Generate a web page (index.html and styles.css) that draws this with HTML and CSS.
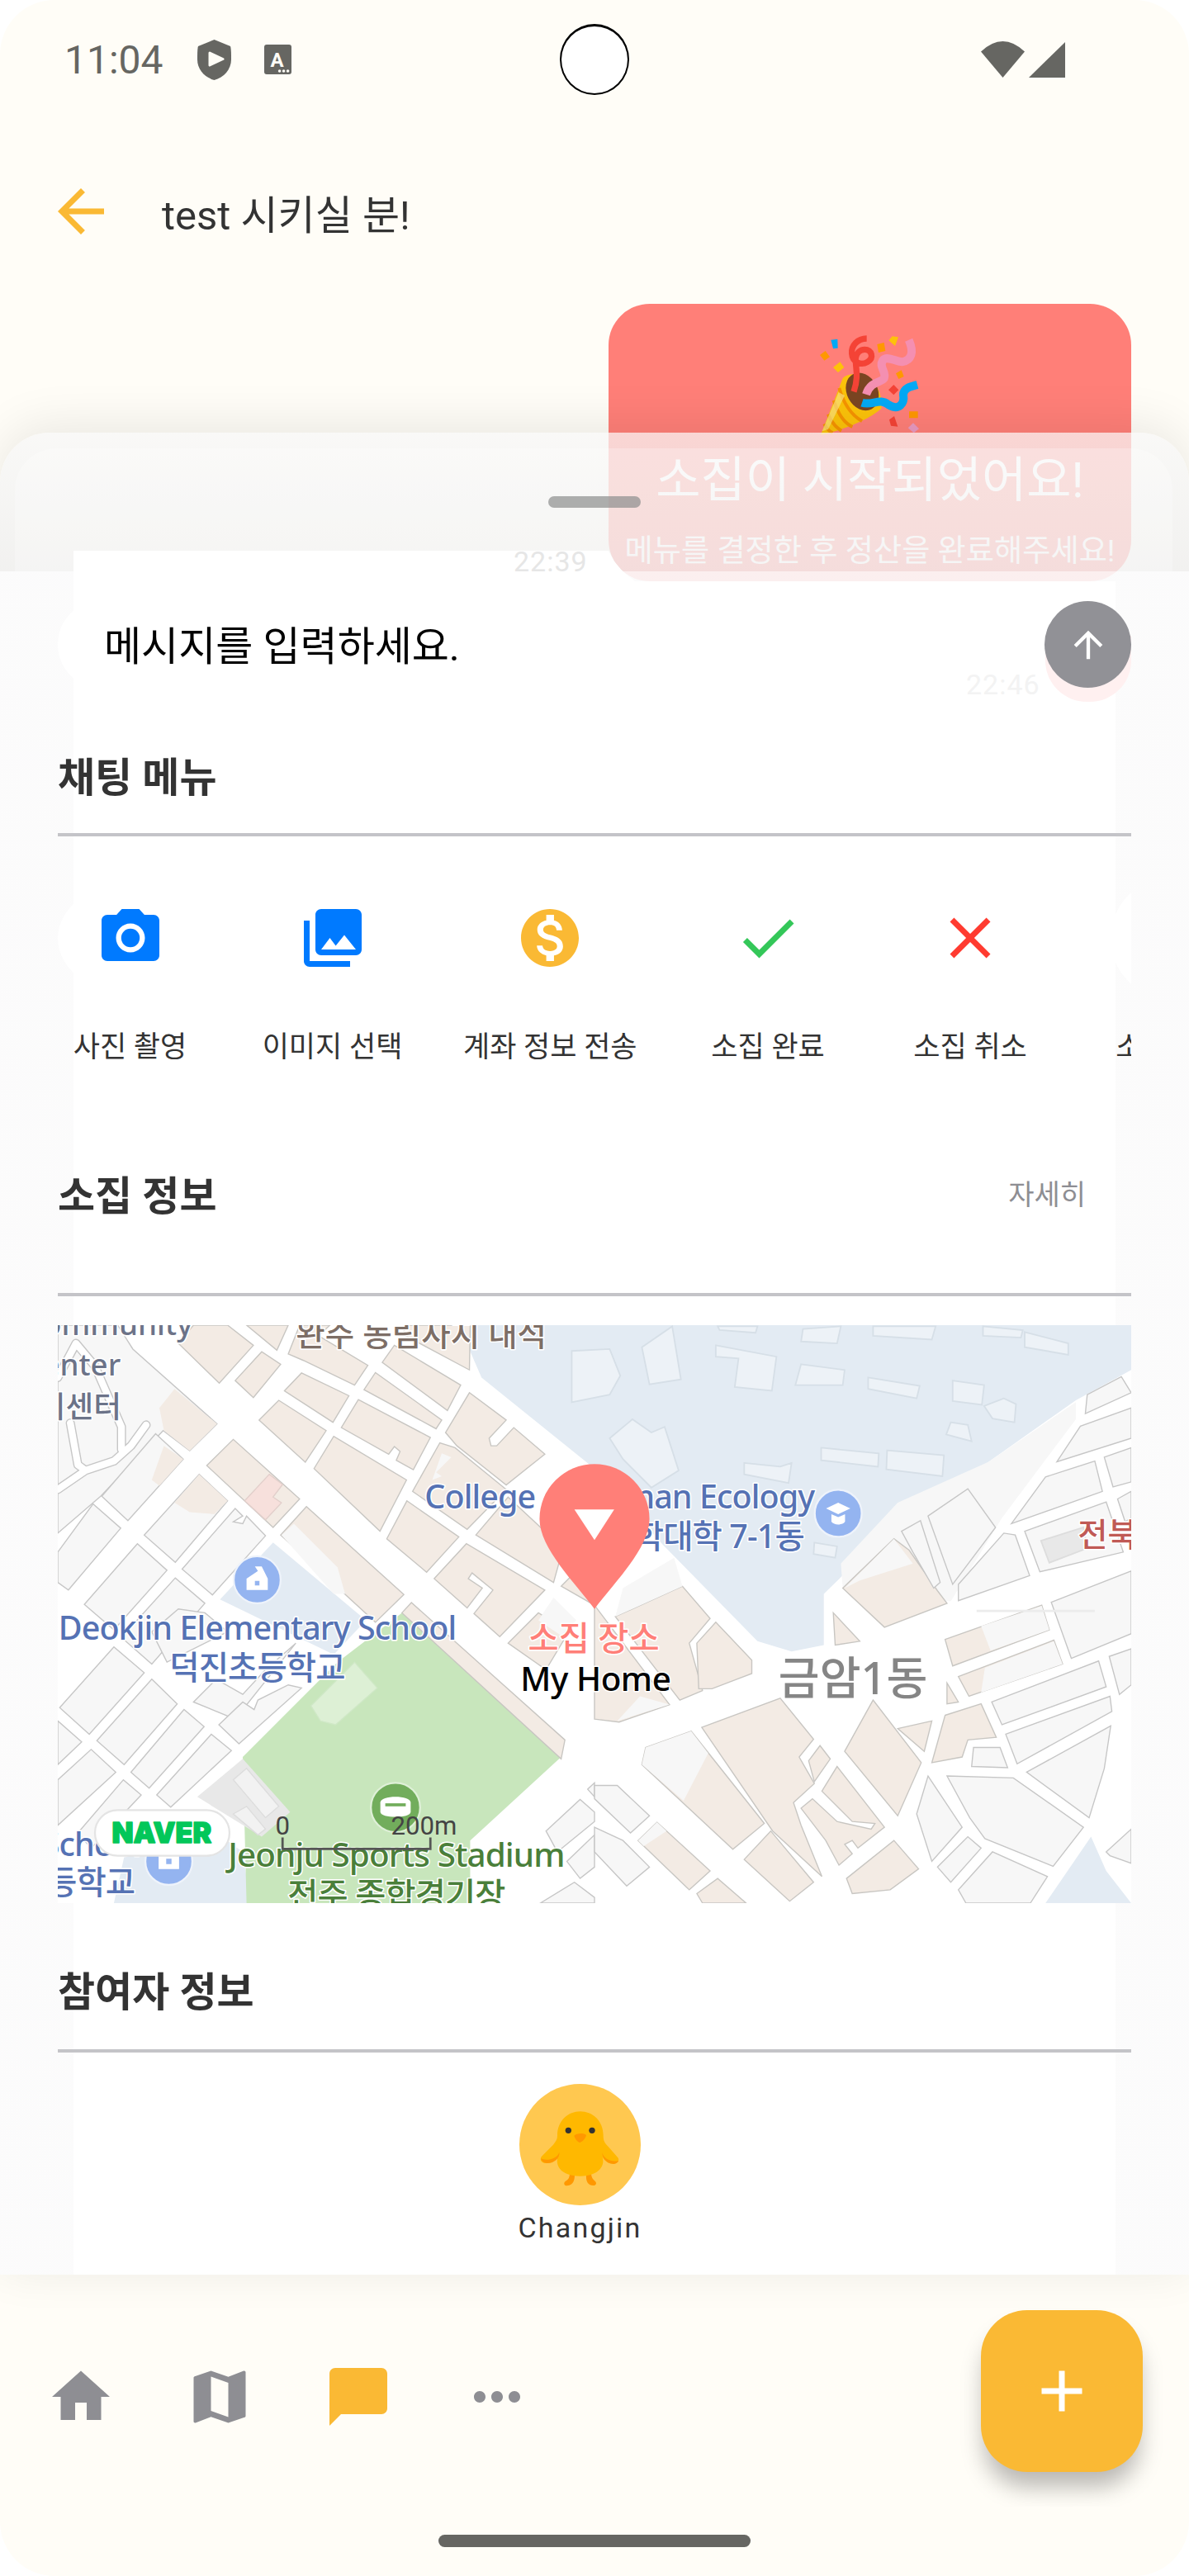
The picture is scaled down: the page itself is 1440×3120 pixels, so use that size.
FILE: index.html
```html
<!DOCTYPE html>
<html lang="ko">
<head>
    <meta charset="UTF-8">
    <meta name="viewport" content="width=device-width, initial-scale=1.0">
    <title>test 시키실 분!</title>
    <link rel="stylesheet" href="styles.css">
</head>
<body>
<div class="screen">
    <div class="status-bar">
        <span class="status-time">11:04</span>
        <svg class="status-shield" viewBox="0 0 41 49"><path d="M20.500 0 40 8c1 3 1 10 1 16 0 12-9 22-20.500 25C9 46 0 36 0 24 0 18 0 11 1 8z"/><path class="cut-round" d="M15 16l16 7.500L15 31z"/></svg>
        <svg class="status-a" viewBox="0 0 33 36"><rect width="33" height="36" rx="3"/><text class="cut-text" x="15.500" y="27" text-anchor="middle">A</text><circle class="cut" cx="18.600" cy="32" r="1.800"/><circle class="cut" cx="23.600" cy="32" r="1.800"/><circle class="cut" cx="28.600" cy="32" r="1.800"/></svg>
        <span class="status-spacer"></span>
        <svg class="status-wifi" viewBox="0 0 53 45"><path d="M26.500 44 0 12.500Q26.500-12.500 53 12.500z"/></svg>
        <svg class="status-signal" viewBox="0 0 44 45"><path d="M44 1v43H0z"/></svg>
    </div>
    <div class="punch-hole"></div>

    <header class="app-header">
        <svg class="icon-84 accent" viewBox="0 0 24 24"><path d="M20 11H7.830l5.590-5.590L12 4l-8 8 8 8 1.410-1.410L7.830 13H20v-2z"/></svg>
        <h1>test 시키실 분!</h1>
    </header>

    <main class="chat">
        <div class="bubble">
            <svg class="popper" viewBox="0 0 450 450">
                <path fill="#fbc20a" d="M45 395 125 190C140 170 190 170 220 190 255 215 270 260 265 300 220 340 120 380 45 395z"/>
                <path fill="none" stroke="#f59300" stroke-width="12" d="M112 225C125 270 150 320 195 345M92 270C105 310 125 350 160 366M72 320C82 345 95 365 120 380M58 355C65 370 72 380 88 388"/>
                <path fill="#fbe37e" opacity="0.7" d="M50 382 110 240 132 252 72 375z"/>
                <ellipse fill="#7a4522" cx="196" cy="238" rx="56" ry="72" transform="rotate(-28 196 238)"/>
                <path fill="none" stroke="#f44336" stroke-width="22" d="M212 45C180 45 155 70 158 100 160 130 190 145 215 130 240 115 230 85 205 85 185 85 175 100 172 115 170 150 185 180 165 238"/>
                <path fill="none" stroke="#f48fb1" stroke-width="30" d="M210 248C225 200 265 205 275 190 285 165 255 150 270 125 285 105 320 130 340 130 375 125 385 95 365 50"/>
                <path fill="none" stroke="#03a9f4" stroke-width="30" d="M195 278C230 290 260 260 290 285 330 310 350 280 345 250 345 225 370 220 396 213"/>
                <path fill="#ff9800" d="M42 105 62 90 78 112 58 125zM250 66 275 60 280 90 255 96zM318 172 338 160 347 183 328 192zM366 310H398V334H366z"/>
                <path fill="#03a9f4" d="M82 50 106 47 107 80 90 82z"/>
                <path fill="#fdc20a" d="M90 150 115 130 130 150 108 168zM292 52 305 37 327 40 315 72z"/>
                <path fill="#f44336" d="M291 232 310 213 328 232 310 250zM294 340 312 327 325 365 300 362z"/>
                <path fill="#e99ac0" d="M362 370 381 352 402 373 383 388z"/>
            </svg>
            <p class="bubble-title">소집이 시작되었어요!</p>
            <p class="bubble-sub">메뉴를 결정한 후 정산을 완료해주세요!</p>
        </div>
    </main>

    <section class="sheet">
        <div class="sheet-panel"></div>
        <span class="ghost-time ghost-one">22:39</span>
        <div class="ghost-mine"></div>

        <div class="sheet-handle"></div>

        <div class="input-row">
            <div class="input-pill">메시지를 입력하세요.</div>
            <button class="send-btn">
                <svg viewBox="0 0 24 24"><path d="M4 12l1.410 1.410L11 7.830V20h2V7.830l5.580 5.590L20 12l-8-8-8 8z"/></svg>
            </button>
        </div>
        <span class="ghost-time ghost-two">22:46</span>

        <div class="section-head first">
            <h2>채팅 메뉴</h2>
        </div>
        <hr>

        <div class="menu-strip">
            <div class="menu-row">
                <div class="menu-item">
                    <svg class="icon-84 blue" viewBox="0 0 24 24"><circle cx="12" cy="12" r="3.200"/><path d="M9 2 7.170 4H4c-1.100 0-2 .9-2 2v12c0 1.100.9 2 2 2h16c1.100 0 2-.9 2-2V6c0-1.100-.9-2-2-2h-3.170L15 2H9zm3 15c-2.760 0-5-2.240-5-5s2.240-5 5-5 5 2.240 5 5-2.240 5-5 5z"/></svg>
                    <span>사진 촬영</span>
                </div>
                <div class="menu-item">
                    <svg class="icon-84 blue" viewBox="0 0 24 24"><path d="M22 16V4c0-1.100-.9-2-2-2H8c-1.100 0-2 .9-2 2v12c0 1.100.9 2 2 2h12c1.100 0 2-.9 2-2zm-11-4 2.030 2.710L16 11l4 5H8l3-4zM2 6v14c0 1.100.9 2 2 2h14v-2H4V6H2z"/></svg>
                    <span>이미지 선택</span>
                </div>
                <div class="menu-item">
                    <svg class="icon-84 accent" viewBox="0 0 24 24"><path d="M12 2C6.480 2 2 6.480 2 12s4.480 10 10 10 10-4.480 10-10S17.520 2 12 2zm1.410 16.090V20h-2.670v-1.930c-1.710-.36-3.160-1.460-3.270-3.400h1.960c.1 1.050.82 1.870 2.650 1.870 1.960 0 2.400-.98 2.400-1.590 0-.83-.44-1.610-2.670-2.140-2.480-.6-4.180-1.620-4.180-3.670 0-1.720 1.390-2.840 3.110-3.210V4h2.670v1.950c1.860.45 2.790 1.860 2.850 3.390H14.300c-.05-1.110-.64-1.870-2.220-1.870-1.500 0-2.400.68-2.400 1.640 0 .84.65 1.390 2.670 1.910s4.180 1.390 4.180 3.910c-.01 1.830-1.380 2.830-3.120 3.160z"/></svg>
                    <span>계좌 정보 전송</span>
                </div>
                <div class="menu-item">
                    <svg class="icon-84 green" viewBox="0 0 24 24"><path d="M9 16.170 4.830 12l-1.420 1.410L9 19 21 7l-1.410-1.410z"/></svg>
                    <span>소집 완료</span>
                </div>
                <div class="menu-item">
                    <svg class="icon-84 red" viewBox="0 0 24 24"><path d="M19 6.410 17.590 5 12 10.590 6.410 5 5 6.410 10.590 12 5 17.590 6.410 19 12 13.410 17.590 19 19 17.590 13.410 12z"/></svg>
                    <span>소집 취소</span>
                </div>
                <div class="menu-item">
                    <div class="icon-84"></div>
                    <span>소집 변경</span>
                </div>
            </div>
        </div>

        <div class="section-head second">
            <h2>소집 정보</h2>
            <a class="more-link">자세히</a>
        </div>
        <hr>

        <svg class="map" viewBox="152 12 2832 1523" preserveAspectRatio="none">
            <rect x="152" y="12" width="2832" height="1523" fill="#fff"/>

            <!-- water and campus -->
            <path class="campus" d="M1210 12 1270 150 1568 390 1748 590 1998 845 2088 872 2173 855 2173 720 2358 540 2608 372 2838 210 2984 130V12z"/>
            <path class="campus" d="M580 735 720 585 965 790 880 880z"/>
            <path class="campus" d="M330 1400 500 1300 640 1400 660 1535H300z"/>
            <path class="campus" d="M2758 1535 2878 1360 2918 1450 2984 1535z"/>

            <!-- park -->
            <path class="park" d="M640 1150 890 900 1060 770 1480 1150 1240 1370V1535H650z"/>
            <path class="park-light" d="M820 1015 935 900 995 968 885 1065 845 1055z"/>
            <path class="lot" d="M520 1255 640 1155 765 1295 690 1360z"/>
            <path class="lot-in" d="M615 1210 650 1180 735 1280 700 1310zM615 1300 650 1280 700 1340 680 1355z"/>

            <!-- upper left, gray ground with small lanes -->
            <path class="gray" d="M152 12H310L350 75 572 272 500 343 430 290 265 463 152 560z"/>
            <path class="lane-o" d="M152 445 225 395 300 370 345 330 385 275M185 270 205 380 225 395M320 280V340M152 150 200 60 250 120 320 280"/>
            <path class="lane-i" d="M152 445 225 395 300 370 345 330 385 275M185 270 205 380 225 395M320 280V340M152 150 200 60 250 120 320 280"/>
            <path class="tan-flat" d="M460 180 572 272 500 343 432 290 420 230z"/>

            <!-- blocks north of the main road -->
            <path class="tan" d="M470 60 510 12H600L668 65 578 165z"/>
            <path class="tan" d="M620 158 690 82 740 115 668 203z"/>
            <path class="tan" d="M650 12H760L730 78z"/>
            <path class="tan" d="M750 185 795 138 920 198 878 268z"/>
            <path class="tan" d="M760 88 800 105 935 170 970 118 840 40 870 12H790z"/>
            <path class="tan" d="M960 182 990 137 1165 262 1150 285z"/>
            <path class="tan" d="M1008 110 1040 65 1215 170 1180 237z"/>
            <path class="tan" d="M1075 12H1240L1238 130 1060 35z"/>
            <path class="tan" d="M683 262 735 210 860 290 805 373z"/>
            <path class="tan" d="M900 282 945 208 1135 308 1090 393 1045 368 1055 345 1040 332 1025 352z"/>
            <path class="tan" d="M828 390 880 305 1072 420 1002 555z"/>
            <path class="tan" d="M1175 295 1238 190 1335 262 1290 310 1295 330 1310 330 1355 282 1437 352 1335 433 1205 330z"/>
            <path class="gray" d="M268 463 410 298 483 365 337 527z"/>
            <path class="tan-flat" d="M400 420 432 330 483 365 420 435z"/>
            <path class="tan" d="M545 382 615 313 790 470 720 545z"/>
            <path class="pinkish" d="M645 475 710 405 745 432 720 465 742 480 700 525z"/>
            <path class="gray" d="M380 565 525 405 600 475 462 637z"/>
            <path class="tan-flat" d="M460 480 525 405 600 475 565 510 500 505z"/>
            <path class="gray" d="M480 655 620 495 640 515 615 530 640 535 650 515 700 567 560 723z"/>
            <path class="tan" d="M740 565 808 490 1065 722 990 795z"/>
            <path class="gray-flat" d="M742 565 775 535 890 650 910 720 880 720z"/>
            <path class="tan" d="M1020 575 1073 475 1210 570 1125 663z"/>
            <path class="tan" d="M1145 680 1230 588 1437 710 1318 833 1250 772 1300 710 1245 665 1235 680 1272 705 1232 757z"/>
            <path class="tan" d="M1088 450 1160 322 1200 335 1335 445 1232 550z"/>
            <path class="gray-flat" d="M1140 420 1165 350 1190 360 1150 400 1165 410z"/>
            <path class="tan" d="M1255 565 1340 465 1485 600 1460 690z"/>
            <path class="tan" d="M1480 700 1520 660 1568 710V750z"/>
            <path class="tan" d="M1060 770 1085 743 1490 1105 1480 1155z"/>
            <path class="tan" d="M1340 850 1420 770 1500 820 1440 920z"/>
            <path class="gray-flat" d="M1420 790 1460 730 1520 790 1480 830z"/>

            <!-- grid southwest -->
            <path class="gray" d="M152 610 245 483 318 547 180 710 152 690z"/>
            <path class="gray" d="M222 748 362 588 440 658 300 815z"/>
            <path class="gray" d="M320 835 462 678 540 745 400 905z"/>
            <path class="gray" d="M157 1020 300 860 380 928 235 1090z"/>
            <path class="gray" d="M255 1107 400 945 467 1010 327 1170z"/>
            <path class="gray" d="M345 1190 485 1025 538 1070 393 1232z"/>
            <path class="gray" d="M413 1250 557 1090 610 1133 450 1282z"/>
            <path class="gray" d="M510 1005 570 945 640 985 700 920 780 850 620 1050z"/>
            <path class="gray" d="M577 1065 640 1005 670 1025 680 1000 760 960 795 968 630 1115z"/>
            <path class="gray" d="M152 1210 240 1130 305 1190 152 1330z"/>
            <path class="gray" d="M152 1055 215 1110 152 1170z"/>
            <path class="gray" d="M205 1350 325 1210 372 1250 240 1390z"/>
            <path class="gray" d="M400 820 470 760 540 770 600 820 440 900z"/>
            <path class="gray" d="M1440 1345 1530 1262 1568 1295V1320L1470 1400z"/>
            <path class="gray" d="M1495 1425 1568 1355V1440L1530 1470z"/>
            <path class="gray" d="M1425 1535 1515 1480 1568 1520V1535z"/>
            <path class="gray" d="M1550 1235 1568 1218V1255z"/>

            <g transform="translate(1568 0)">
                <!-- buildings on campus -->
                <path class="hall" d="M125 70 205 15 228 155 145 168z"/>
                <path class="hall" d="M-60 80 40 75 68 145 40 195-60 215z"/>
                <path class="hall" d="M320 65 480 95 468 185 370 175 380 100 320 95z"/>
                <path class="hall" d="M545 115 660 130 655 170 530 170z"/>
                <path class="hall" d="M722 150 858 172 850 205 722 180z"/>
                <path class="hall" d="M945 158 1028 170 1022 222 945 212z"/>
                <path class="hall" d="M1028 225 1080 205 1112 220 1108 268 1050 258z"/>
                <path class="hall" d="M40 310 100 260 150 295 185 280 222 395 150 440 75 365z"/>
                <path class="hall" d="M598 335 750 350 748 385 598 368z"/>
                <path class="hall" d="M772 342 922 355 918 410 770 392z"/>
                <path class="hall" d="M395 375 490 385 520 375 512 428 395 405z"/>
                <path class="hall" d="M940 268 985 275 995 318 928 300z"/>
                <path class="hall" d="M580 585 640 595 635 625 578 615z"/>
                <path class="hall" d="M325 15H430L425 32 330 25z"/>
                <path class="hall" d="M550 22 650 15 640 60 545 55z"/>
                <path class="hall" d="M735 15H900L890 50 735 40z"/>
                <path class="hall" d="M1025 15 1130 25 1125 45 1025 40z"/>
                <path class="hall" d="M1135 30 1250 60 1250 90 1135 70z"/>

                <path class="gray-flat" d="M650 640 800 480 1040 372 1270 215V260L1075 520 940 740 655 705z"/>

                <!-- east of the campus -->
                <path class="tan" d="M655 705 790 575 830 605 905 712 930 745 765 808z"/>
                <path class="gray-flat" d="M660 705 790 575 840 640 700 685z"/>
                <path class="gray" d="M810 555 860 527 912 690 895 705 840 610z"/>
                <path class="gray" d="M880 515 985 443 1058 545 945 695z"/>
                <path class="gray" d="M1100 535 1190 412 1320 370 1340 450z"/>
                <path class="gray" d="M1220 372 1282 278 1416 230V310z"/>
                <path class="gray" d="M1295 245 1300 195 1390 148 1416 190z"/>
                <path class="gray" d="M1345 360 1416 335V425L1368 438z"/>
                <path class="gray" d="M1135 555 1350 478 1395 610 1175 662z"/>
                <path class="lot-block" d="M1178 580 1290 545 1300 600 1200 638z"/>
                <path class="gray" d="M1380 470 1416 450V520L1400 530z"/>
                <path class="gray" d="M960 695 1080 560 1110 565 1148 672 960 738z"/>
                <path class="gray" d="M1205 742 1416 660V825L1258 890z"/>
                <path class="tan" d="M925 840 1180 750 1200 815 945 910z"/>
                <path class="gray-flat" d="M1020 805 1180 752 1200 815 1045 870z"/>
                <path class="tan" d="M960 938 1212 842 1235 905 988 990z"/>
                <path class="gray-flat" d="M1030 915 1212 845 1235 905 1020 980z"/>
                <path class="gray" d="M1048 1005 1330 897 1350 965 1075 1065z"/>
                <path class="gray" d="M1085 1090 1360 990 1365 1030 1115 1168z"/>
                <path class="gray" d="M1140 1190 1362 1068 1345 1180 1305 1310z"/>
                <path class="gray" d="M1358 885 1416 865V960L1385 985z"/>
                <path class="gray" d="M930 1200 1105 1205 1290 1335 1210 1438 1030 1365 990 1310z"/>
                <path class="gray" d="M1000 1125H1070L1090 1178 995 1175z"/>
                <path class="tan" d="M925 1040 1020 1010 1060 1098 985 1105 970 1150 890 1165z"/>
                <path class="tan" d="M800 1075 890 1055 870 1135z"/>
                <path class="tan" d="M630 770 700 845 635 855z"/>
                <path class="tan" d="M930 955 960 1005 930 1010z"/>
                <path class="gray" d="M850 1300 880 1200 970 1335 890 1425z"/>
                <path class="gray" d="M960 1500 1050 1400 1195 1465 1150 1535H980z"/>
                <path class="gray" d="M905 1440 985 1360 1020 1390 940 1480z"/>
                <path class="gray" d="M1350 1400 1416 1340V1430L1360 1410z"/>

                <!-- south of the main road -->
                <path class="tan" d="M255 1082 448 1325 365 1393 125 1170 135 1125z"/>
                <path class="gray-flat" d="M135 1125 255 1082 300 1140 235 1265 125 1170z"/>
                <path class="tan" d="M283 1072 490 995 578 1103 540 1150 580 1220 525 1270 545 1330 600 1465 470 1345z"/>
                <path class="tan" d="M395 1420 465 1345 578 1480 515 1530z"/>
                <path class="tan" d="M660 1135 735 1000 862 1165 800 1305z"/>
                <path class="tan" d="M565 1160 595 1120 622 1155 580 1215z"/>
                <path class="tan" d="M600 1240 640 1175 765 1335 695 1390 680 1370 660 1380 680 1405 645 1435 610 1370 545 1285 575 1260 640 1320 730 1340 740 1325 680 1320z"/>
                <path class="tan" d="M665 1470 790 1370 855 1445 780 1500 680 1510z"/>
                <path class="tan" d="M115 1370 165 1322 305 1450 250 1500z"/>
                <path class="gray-flat" d="M115 1370 165 1322 190 1345 130 1385z"/>
                <path class="gray" d="M0 1225H60L145 1305 95 1350 0 1260z"/>
                <path class="gray" d="M0 1335 75 1370 145 1440 85 1490 0 1400z"/>
                <path class="tan" d="M270 1510 325 1470 400 1535H285z"/>
                <path class="tan" d="M0 1050 65 1058 198 1012 0 750z"/>
                <path class="gray-flat" d="M60 1055 120 990 198 1012z"/>
                <path class="tan" d="M55 780 232 700 305 785 250 850 285 975 225 1000z"/>
                <path class="gray-flat" d="M75 705 210 625 232 700 55 780z"/>
                <path class="tan" d="M275 970H310L415 930V895L320 795 270 850z"/>
                <path class="road-mark" d="M1008 765H1320"/>
            </g>

            <!-- place icons -->
            <g class="poi-blue">
                <circle cx="678" cy="683" r="62"/>
                <circle cx="445" cy="1425" r="62"/>
                <circle cx="2211" cy="508" r="62"/>
            </g>
            <path class="poi-mark" d="M650 680 680 660 672 648 690 648 706 680V710H650zM418 1400H472V1445H418zM2179 495 2211 480 2243 495 2211 510zM2193 510 2211 518 2229 510V530C2222 540 2200 540 2193 530z"/>
            <path class="poi-dot" d="M672 686H684V698H672zM438 1418H452V1432H438z"/>
            <circle class="poi-green" cx="1043" cy="1283" r="65"/>
            <path class="poi-mark" d="M1003 1270C1003 1250 1083 1250 1083 1270V1295C1083 1312 1003 1312 1003 1295z"/>
            <path class="poi-green-line" d="M1016 1276H1070"/>

            <!-- place names -->
            <text class="l-gray" x="508" y="38" text-anchor="end">Community</text>
            <text class="l-gray" x="318" y="145" text-anchor="end">Center</text>
            <text class="l-gray" x="320" y="255" text-anchor="end">복지센터</text>
            <text class="l-brown" x="780" y="66">완주 동림사지 내석</text>
            <text class="l-blue" x="1120" y="495">College of Human Ecology</text>
            <text class="l-blue" x="2121" y="600" text-anchor="end">생활과학대학 7-1동</text>
            <text class="l-blue" x="678" y="840" text-anchor="middle">Deokjin Elementary School</text>
            <text class="l-blue" x="678" y="945" text-anchor="middle">덕진초등학교</text>
            <text class="l-blue" x="370" y="1410" text-anchor="end">School</text>
            <text class="l-blue" x="355" y="1510" text-anchor="end">덕진초등학교</text>
            <text class="l-green" x="1045" y="1440" text-anchor="middle">Jeonju Sports Stadium</text>
            <text class="l-green" x="1045" y="1545" text-anchor="middle">전주 종합경기장</text>
            <text class="l-dong" x="2250" y="985" text-anchor="middle">금암1동</text>
            <text class="l-red" x="2843" y="595">전북대학교</text>

            <!-- scale bar -->
            <path class="scale" d="M745 1362V1392H1135V1362"/>
            <text class="l-scale" x="745" y="1355" text-anchor="middle">0</text>
            <text class="l-scale" x="1118" y="1355" text-anchor="middle">200m</text>

            <!-- naver badge -->
            <rect class="naver-pill" x="250" y="1290" width="355" height="120" rx="60"/>
            <text class="naver-text" x="426" y="1376" text-anchor="middle">NAVER</text>

            <!-- pin -->
            <path class="pin" d="M1568 378A145 145 0 0 1 1713 523C1713 600 1620 690 1568 760 1516 690 1423 600 1423 523A145 145 0 0 1 1568 378z"/>
            <path class="pin-cut" d="M1515 498H1620L1568 578z"/>
            <text class="l-pin" x="1566" y="870" text-anchor="middle">소집 장소</text>
            <text class="l-home" x="1571" y="975" text-anchor="middle">My Home</text>
        </svg>

        <div class="section-head third">
            <h2>참여자 정보</h2>
        </div>
        <hr>

        <div class="members">
            <div class="member">
                <div class="avatar">
                    <svg viewBox="27 27 441 441">
                        <path fill="#ff9800" d="M210 355H228C228 375 225 395 200 397 188 397 187 385 195 380 205 375 208 370 210 355zM270 355H288C290 370 296 375 302 380 310 388 305 396 295 396 275 396 268 380 270 355z"/>
                        <path fill="#ffb800" d="M165 215C165 160 205 127 248 127 292 127 332 160 332 215 332 232 336 240 350 255L385 295C395 308 375 318 355 315 345 312 335 305 328 292 340 320 320 362 248 362 176 362 150 320 172 278 165 300 150 315 125 315 105 315 100 300 108 290L150 248C160 235 165 228 165 215z"/>
                        <path fill="#ff9800" d="M105 298C125 308 165 300 172 275 175 295 155 315 128 315 115 315 107 307 105 298zM388 305C370 312 335 305 328 277 328 297 345 318 368 318 378 318 385 312 388 305z"/>
                        <circle fill="#333" cx="205" cy="196" r="11"/>
                        <circle fill="#333" cx="291" cy="196" r="11"/>
                        <path fill="#ff9800" d="M226 215C235 205 262 205 270 213 268 225 255 238 247 240 238 238 228 225 226 215z"/>
                    </svg>
                </div>
                <span>Changjin</span>
            </div>
        </div>
    </section>

    <nav class="tab-bar">
        <svg class="icon-84 muted" viewBox="0 0 24 24"><path d="M10 20v-6h4v6h5v-8h3L12 3 2 12h3v8z"/></svg>
        <svg class="icon-84 muted" viewBox="0 0 24 24"><path d="M20.500 3l-.16.03L15 5.100 9 3 3.360 4.900c-.21.07-.36.25-.36.48V20.500c0 .28.22.5.5.5l.16-.03L9 18.900l6 2.100 5.640-1.900c.21-.07.36-.25.36-.48V3.500c0-.28-.22-.5-.5-.5zM15 19l-6-2.110V5l6 2.110V19z"/></svg>
        <svg class="icon-84 accent" viewBox="0 0 24 24"><path d="M20 2H4c-1.100 0-1.990.9-1.990 2L2 22l4-4h14c1.100 0 2-.9 2-2V4c0-1.100-.9-2-2-2z"/></svg>
        <svg class="icon-84 muted" viewBox="0 0 24 24"><path d="M6 10c-1.100 0-2 .9-2 2s.9 2 2 2 2-.9 2-2-.9-2-2-2zm12 0c-1.100 0-2 .9-2 2s.9 2 2 2 2-.9 2-2-.9-2-2-2zm-6 0c-1.100 0-2 .9-2 2s.9 2 2 2 2-.9 2-2-.9-2-2-2z"/></svg>
    </nav>

    <div class="fab-clip">
        <button class="fab">
            <svg class="icon-84" viewBox="0 0 24 24"><path d="M19 13h-6v6h-2v-6H5v-2h6V5h2v6h6v2z"/></svg>
        </button>
    </div>

    <div class="gesture-bar"></div>
</div>
</body>
</html>
```

FILE: styles.css
```css
* {
    box-sizing: border-box;
}
body {
    margin: 0;
    background-color: #fff;
    font-family: Roboto, 'Noto Sans CJK KR', sans-serif;
    color: #333;
}
h1, h2, p {
    margin: 0;
    font-weight: 400;
}
.screen {
    position: relative;
    display: flex;
    flex-direction: column;
    width: 1440px;
    height: 3120px;
    overflow: hidden;
    background-color: #fffdf7;
    border-radius: 66px;
}
.icon-84 {
    display: block;
    flex: none;
    width: 84px;
    height: 84px;
    fill: #fff;
}
.accent { fill: #fab934; }
.blue { fill: #007aff; }
.green { fill: #34c759; }
.red { fill: #ff3b30; }
.muted { fill: #8e8e93; }

/* status bar */
.status-bar {
    flex: none;
    display: flex;
    align-items: center;
    height: 144px;
    padding: 0 150px 0 78px;
    color: #666662;
    fill: #666662;
}
.status-time {
    width: 161px;
    font-size: 48px;
}
.status-shield {
    width: 41px;
    height: 49px;
}
.status-a {
    width: 33px;
    height: 36px;
    margin-left: 40px;
}
.cut { fill: #fffdf7; }
.cut-round {
    fill: #fffdf7;
    stroke: #fffdf7;
    stroke-width: 3;
    stroke-linejoin: round;
}
.cut-text {
    fill: #fffdf7;
    font-size: 24px;
    font-weight: 700;
}
.status-spacer { flex: 1; }
.status-wifi {
    width: 53px;
    height: 45px;
}
.status-signal {
    width: 44px;
    height: 45px;
    margin-left: 5px;
}
.punch-hole {
    position: absolute;
    top: 29px;
    left: 678px;
    width: 84px;
    height: 86px;
    background-color: #fff;
    border: 2px solid #000;
    border-top-width: 3px;
    border-radius: 50%;
}

/* header */
.app-header {
    flex: none;
    display: flex;
    align-items: center;
    height: 224px;
    padding-left: 56px;
}
.app-header h1 {
    margin-left: 56px;
    font-size: 49px;
}

/* chat behind the sheet */
.chat {
    flex: 1;
    display: flex;
    justify-content: flex-end;
    align-items: flex-start;
    padding-right: 70px;
}
.bubble {
    display: flex;
    flex-direction: column;
    align-items: center;
    width: 633px;
    height: 336px;
    padding-top: 27px;
    color: #fff;
    background-color: #ff7f78;
    border-radius: 50px;
}
.popper {
    flex: none;
    width: 150px;
    height: 150px;
}
.bubble-title {
    margin-top: -5px;
    font-size: 59px;
    line-height: 84px;
    white-space: nowrap;
}
.bubble-sub {
    margin-top: 15px;
    font-size: 37.2px;
    line-height: 56px;
    white-space: nowrap;
}

/* bottom sheet */
.sheet {
    position: absolute;
    top: 524px;
    left: 0;
    right: 0;
    height: 2231px;
    background: linear-gradient(180deg, rgba(247,247,247,0.72) 0, rgba(237,237,237,0.75) 168px, rgba(251,251,252,0.9) 168px);
    border-radius: 60px 60px 0 0;
    box-shadow: 0 -8px 60px rgba(0,0,0,0.09);
}
.sheet::before {
    content: "";
    position: absolute;
    top: 19px;
    left: 18px;
    right: 20px;
    height: 149px;
    background-color: rgba(255,255,255,0.25);
    border-radius: 50px 50px 0 0;
}
.sheet > * {
    position: relative;
}
/* white panel, notched where the bubble shows through */
.sheet .sheet-panel {
    position: absolute;
    top: 143px;
    left: 89px;
    right: 89px;
    bottom: 0;
    background-color: #fff;
    clip-path: polygon(0 0, 648px 0, 655px 13px, 665px 25px, 680px 37px, 1262px 37px, 1262px 100%, 0 100%);
}
.ghost-time {
    font-size: 34px;
    letter-spacing: 1px;
}
.sheet .ghost-one {
    position: absolute;
    top: 136px;
    left: 622px;
    color: #e6e6e6;
}
.sheet .ghost-two {
    position: absolute;
    top: 285px;
    left: 1170px;
    color: #f3f3f3;
}
.sheet .ghost-mine {
    position: absolute;
    top: 246px;
    left: 1266px;
    width: 104px;
    height: 80px;
    background-color: #fff0f0;
    border-radius: 0 0 50px 50px;
}
.sheet-handle {
    width: 112px;
    height: 14px;
    margin: 77px auto 0;
    background-color: rgba(139,141,141,0.7);
    border-radius: 7px;
}
.input-row {
    display: flex;
    align-items: center;
    height: 105px;
    margin: 113px 70px 0;
}
.input-pill {
    flex: 1;
    height: 105px;
    padding: 3px 56px 0;
    font-size: 49px;
    line-height: 105px;
    color: #000;
    background-color: #fff;
    border-radius: 52px;
}
.send-btn {
    flex: none;
    display: flex;
    align-items: center;
    justify-content: center;
    width: 105px;
    height: 105px;
    padding: 0;
    background-color: #919196;
    border: none;
    border-radius: 50%;
}
.send-btn svg {
    width: 52px;
    height: 52px;
    fill: #fff;
}

/* sections */
.section-head {
    display: flex;
    align-items: center;
    justify-content: space-between;
    height: 72px;
    margin: 0 70px;
}
.section-head.first { margin-top: 68px; }
.section-head.second { margin-top: 0; }
.section-head.third { margin-top: 67px; }
.section-head h2 {
    font-size: 49px;
    font-weight: 700;
}
.section-head.first + hr { margin-top: 36px; }
.section-head.third + hr { margin-top: 38px; }
hr {
    height: 4px;
    margin: 86px 70px 0;
    background-color: #c4c4c8;
    border: none;
}
.more-link {
    margin-right: 55px;
    font-size: 34px;
    color: #8e8e93;
}

/* chat menu */
.menu-strip {
    margin: 0 70px;
    height: 395px;
    overflow: hidden;
}
.menu-strip::before,
.menu-strip::after {
    content: "";
    position: absolute;
    top: 50px;
    height: 147px;
    background-color: #fff;
    border-radius: 50%;
}
.menu-strip::before {
    left: 0;
    width: 214px;
}
.menu-strip::after {
    left: 1275px;
    width: 147px;
}
.menu-row {
    position: relative;
    display: flex;
    margin-left: -35px;
    padding-top: 81px;
}
.menu-item {
    flex: none;
    display: flex;
    flex-direction: column;
    align-items: center;
    gap: 68px;
    min-width: 245px;
    padding: 0 36px;
    font-size: 35px;
    line-height: 46px;
    white-space: nowrap;
}

/* map */
.map {
    display: block;
    width: 1300px;
    height: 700px;
    margin: 35px 70px 0;
}
.campus { fill: #e3ebf3; }
.park { fill: #c8e6bc; }
.park-light { fill: #ddf0d5; stroke: #cfe8c6; stroke-width: 3; }
.lot { fill: #e8e8e8; }
.lot-in { fill: #f2f2f2; stroke: #ddd; stroke-width: 3; }
.lot-block { fill: #e8e8e8; stroke: #ddd; stroke-width: 4; }
.gray { fill: #f7f7f7; stroke: #c6c6c6; stroke-width: 3; }
.tan { fill: #f3ebe4; stroke: #c8c6c2; stroke-width: 3; }
.gray-flat { fill: #f7f7f7; }
.tan-flat { fill: #f3ebe4; }
.pinkish { fill: #f7e0dc; stroke: #e2cfcb; stroke-width: 3; }
.hall { fill: #edf2f7; stroke: #d6dfe7; stroke-width: 4; }
.lane-o { fill: none; stroke: #c6c6c6; stroke-width: 24; stroke-linecap: round; stroke-linejoin: round; }
.lane-i { fill: none; stroke: #fff; stroke-width: 18; stroke-linecap: round; stroke-linejoin: round; }
.road-mark { stroke: #ececec; stroke-width: 6; fill: none; }
.poi-blue circle { fill: #94b4f0; stroke: #eef3fb; stroke-width: 5; }
.poi-mark { fill: #fff; }
.poi-dot { fill: #94b4f0; }
.poi-green { fill: #72ad5c; stroke: #dff0d8; stroke-width: 5; }
.poi-green-line { stroke: #72ad5c; stroke-width: 8; fill: none; }
.map text {
    font-family: 'Noto Sans', 'Noto Sans CJK KR', sans-serif;
    font-weight: 500;
    paint-order: stroke;
    stroke: #fff;
    stroke-width: 7;
    stroke-linejoin: round;
}
.l-gray { font-size: 80px; fill: #6c7388; }
.l-brown { font-size: 84px; fill: #7d6e66; }
.l-blue { font-size: 86px; fill: #5572b4; letter-spacing: -2px; }
.l-green { font-size: 88px; fill: #4a7f3a; letter-spacing: -2px; }
.l-dong { font-size: 118px; fill: #858585; }
.l-red { font-size: 86px; fill: #c05a55; }
.l-pin { font-size: 88px; fill: #ff7f78; }
.l-home { font-size: 88px; fill: #000; letter-spacing: -1px; }
.map .l-scale {
    font-family: Roboto, sans-serif;
    font-weight: 400;
    font-size: 68px;
    fill: #444;
    stroke-width: 0;
}
.scale { fill: none; stroke: #555; stroke-width: 6; }
.naver-pill { fill: #fff; stroke: #e4e4e4; stroke-width: 5; }
.map .naver-text {
    font-family: Inter, sans-serif;
    font-size: 74px;
    font-weight: 900;
    fill: #03c75a;
    stroke: #03c75a;
    stroke-width: 3;
}
.pin { fill: #ff7f78; }
.pin-cut { fill: #fff; }

/* members */
.members {
    display: flex;
    padding: 38px 0 0 629px;
}
.member {
    display: flex;
    flex-direction: column;
    align-items: center;
    width: 147px;
}
.avatar {
    width: 147px;
    height: 147px;
    background-color: #ffc850;
    border-radius: 50%;
}
.avatar svg {
    display: block;
}
.member span {
    margin-top: 4px;
    font-size: 34px;
    line-height: 46px;
    letter-spacing: 2.2px;
    white-space: nowrap;
}

/* bottom nav */
.tab-bar {
    flex: none;
    display: flex;
    gap: 84px;
    height: 365px;
    padding: 106px 0 0 56px;
}
.fab-clip {
    position: absolute;
    top: 2755px;
    right: 0;
    width: 300px;
    height: 281px;
    overflow: hidden;
}
.fab {
    display: flex;
    align-items: center;
    justify-content: center;
    width: 196px;
    height: 196px;
    margin: 43px 0 0 48px;
    padding: 0;
    background-color: #fab934;
    border: none;
    border-radius: 56px;
    box-shadow: 0 22px 28px -4px rgba(0,0,0,0.28);
}
.gesture-bar {
    position: absolute;
    top: 3070px;
    left: 531px;
    width: 378px;
    height: 15px;
    background-color: #666662;
    border-radius: 8px;
}
```
